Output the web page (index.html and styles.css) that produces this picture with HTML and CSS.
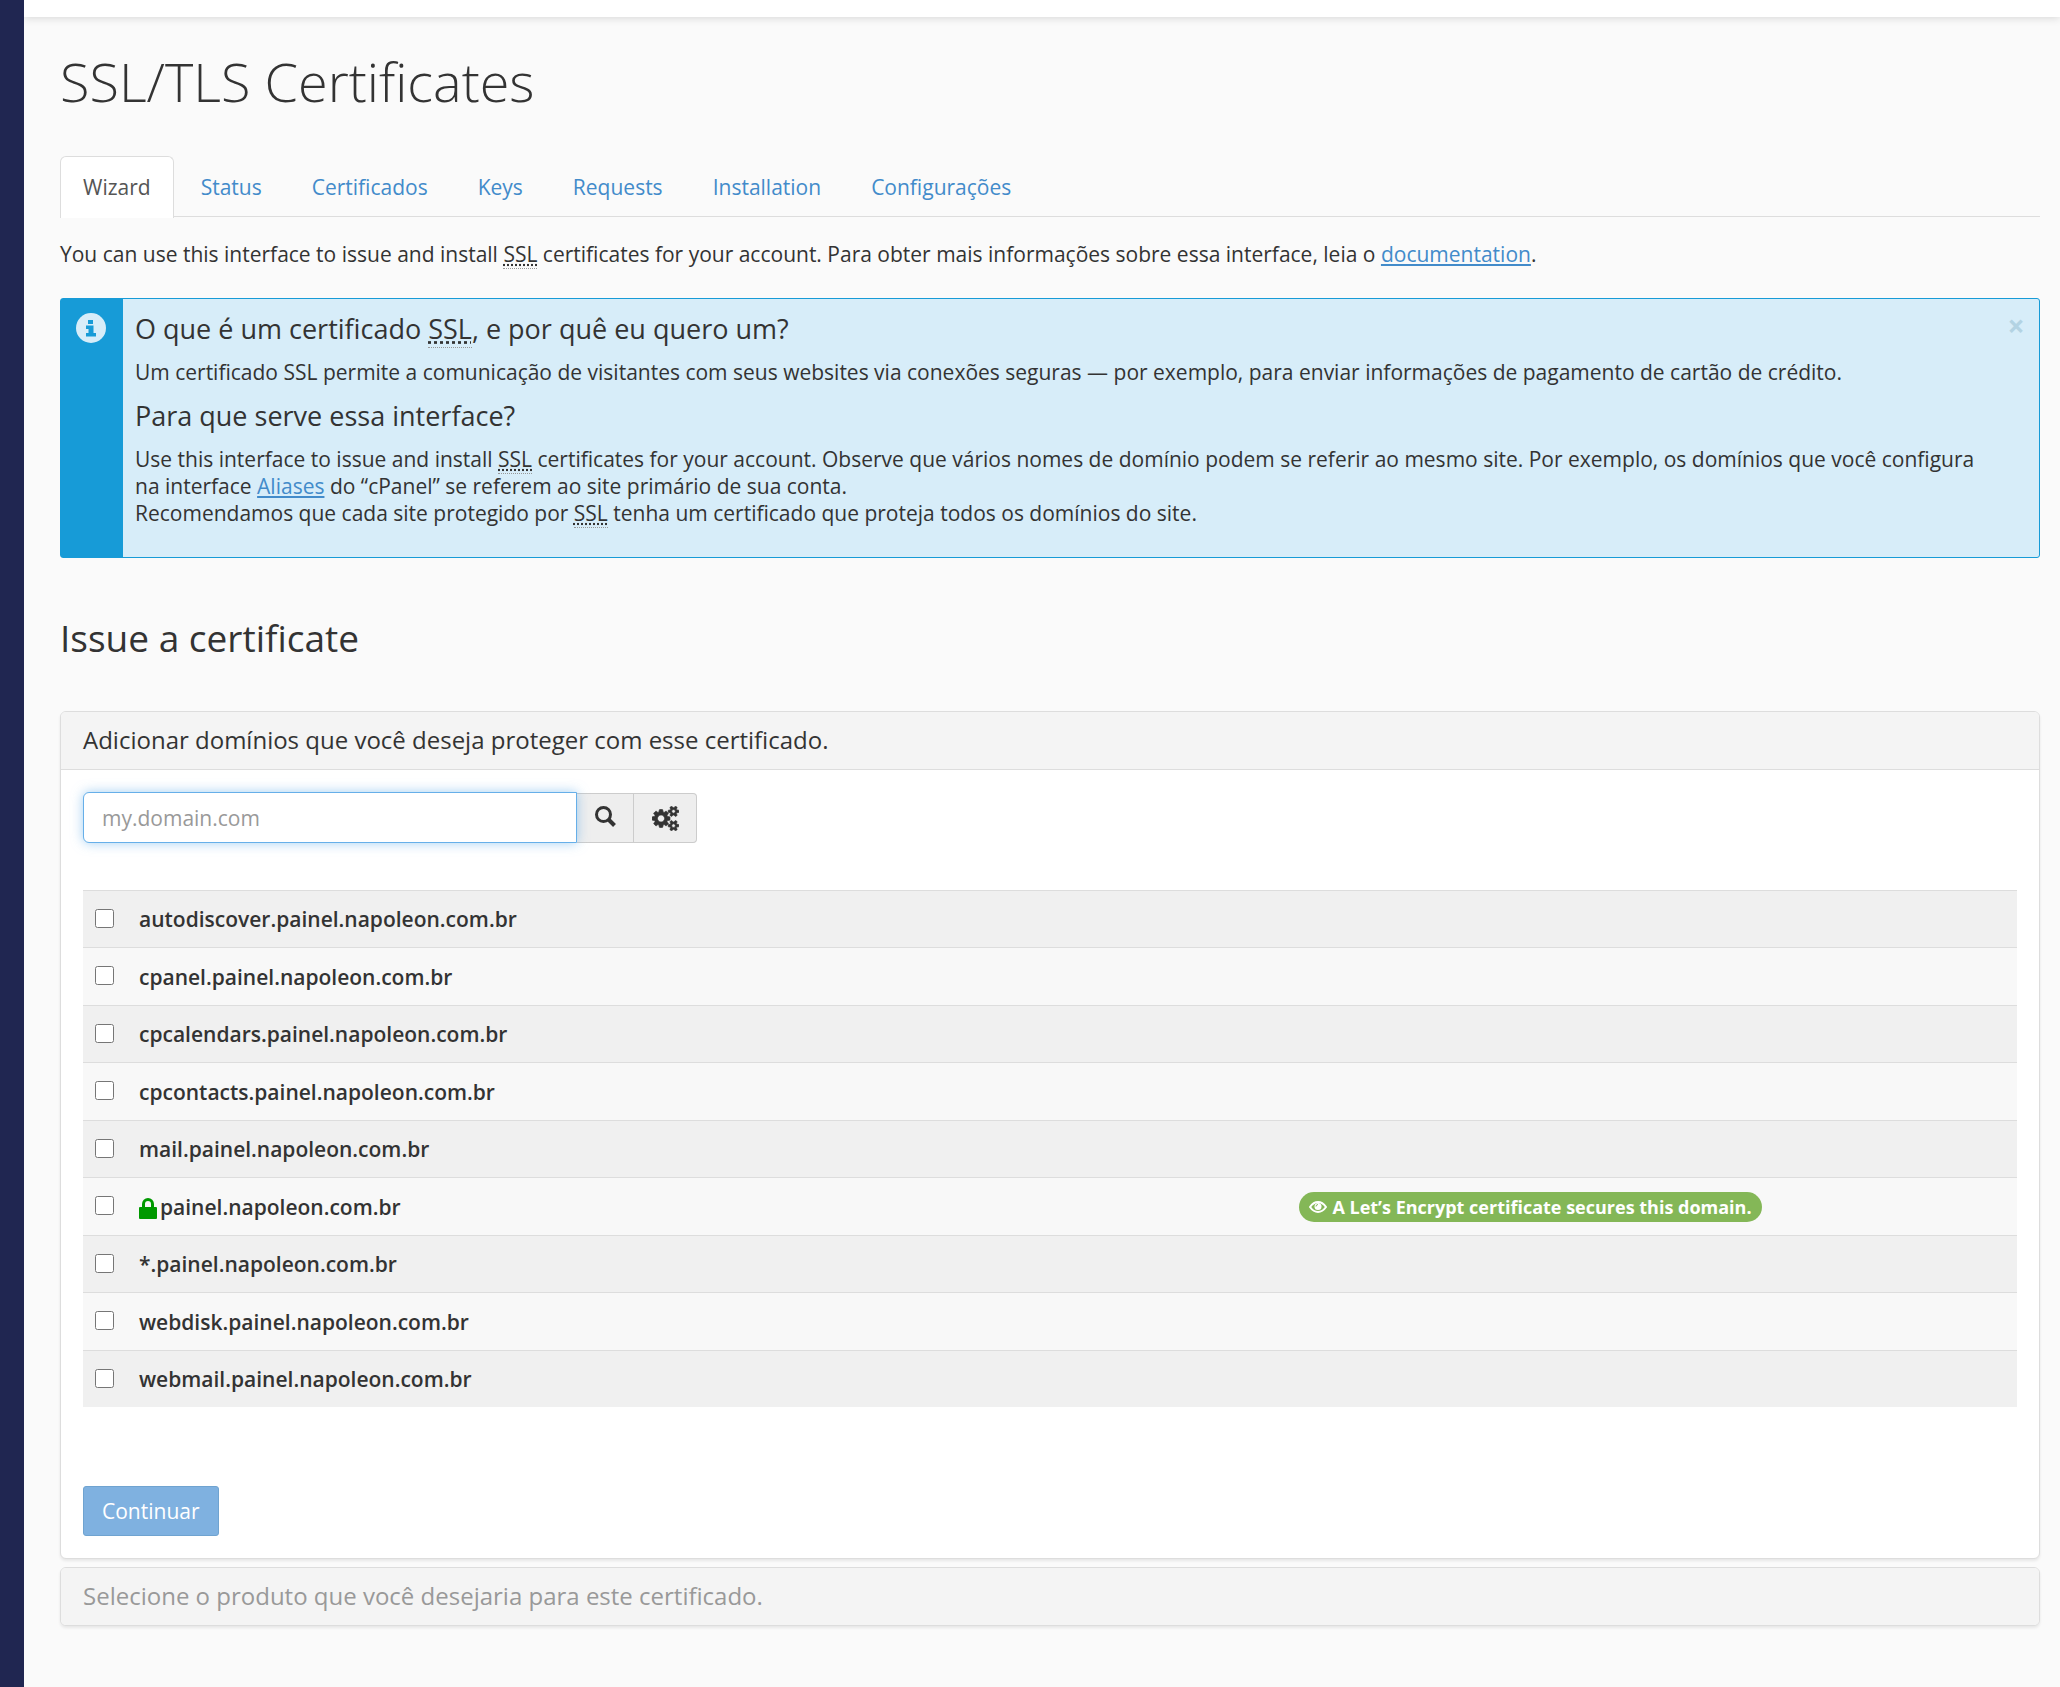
FILE: index.html
```
<!DOCTYPE html>
<html lang="pt-BR">
<head>
    <meta charset="UTF-8">
    <meta name="viewport" content="width=device-width, initial-scale=1.0">
    <title>SSL/TLS Certificates</title>
    <link rel="stylesheet" href="styles.css">
</head>
<body>
    <div class="sidebar"></div>
    <div class="page">
        <header class="topbar"></header>
        <main class="content">
            <h1>SSL/TLS Certificates</h1>

            <nav class="tabs">
                <a href="#" class="tab active">Wizard</a>
                <a href="#" class="tab">Status</a>
                <a href="#" class="tab">Certificados</a>
                <a href="#" class="tab">Keys</a>
                <a href="#" class="tab">Requests</a>
                <a href="#" class="tab">Installation</a>
                <a href="#" class="tab">Configurações</a>
            </nav>

            <p class="intro">You can use this interface to issue and install <abbr title="Secure Sockets Layer">SSL</abbr> certificates for your account. Para obter mais informações sobre essa interface, leia o <a href="#">documentation</a>.</p>

            <div class="alert">
                <div class="alert-icon">
                    <svg width="30" height="30" viewBox="0 0 30 30">
                        <circle cx="15" cy="15" r="15" fill="#d7edf9"/>
                        <path d="M12 7h5v4h-5zM10 12.500h7.500v7.500h2.500v3.500h-10v-3.500h2.500v-4h-2.500z" fill="#179bd7"/>
                    </svg>
                </div>
                <div class="alert-body">
                    <h3>O que é um certificado <abbr title="Secure Sockets Layer">SSL</abbr>, e por quê eu quero um?</h3>
                    <p>Um certificado SSL permite a comunicação de visitantes com seus websites via conexões seguras — por exemplo, para enviar informações de pagamento de cartão de crédito.</p>
                    <h3>Para que serve essa interface?</h3>
                    <p>Use this interface to issue and install <abbr title="Secure Sockets Layer">SSL</abbr> certificates for your account. Observe que vários nomes de domínio podem se referir ao mesmo site. Por exemplo, os domínios que você configura na interface <a href="#">Aliases</a> do “cPanel” se referem ao site primário de sua conta.<br>
                    Recomendamos que cada site protegido por <abbr title="Secure Sockets Layer">SSL</abbr> tenha um certificado que proteja todos os domínios do site.</p>
                </div>
                <button type="button" class="close" aria-label="Fechar">×</button>
            </div>

            <h2>Issue a certificate</h2>

            <section class="panel">
                <h4 class="panel-heading">Adicionar domínios que você deseja proteger com esse certificado.</h4>
                <form class="panel-body">
                    <div class="search">
                        <input type="text" class="search-input" placeholder="my.domain.com" aria-label="Domínio">
                        <button type="button" class="search-btn" aria-label="Pesquisar">
                            <svg width="21" height="21" viewBox="0 0 21 21" fill="none" stroke="#333">
                                <circle cx="8.500" cy="8.500" r="7" stroke-width="3"/>
                                <path d="M13.500 13.500l6 6" stroke-width="4"/>
                            </svg>
                        </button>
                        <button type="button" class="search-btn search-btn-last" aria-label="Configurações">
                            <svg width="27" height="25" viewBox="0 0 1920 1792" fill="#333" stroke="#333" stroke-width="50"><path d="M896 896q0-106-75-181t-181-75-181 75-75 181 75 181 181 75 181-75 75-181zm768 512q0-52-38-90t-90-38-90 38-38 90q0 53 37.500 90.500t90.500 37.500 90.500-37.500 37.500-90.500zm0-1024q0-52-38-90t-90-38-90 38-38 90q0 53 37.500 90.500t90.500 37.500 90.500-37.500 37.500-90.500zm-384 421v185q0 10-7 19.500t-16 10.500l-155 24q-11 35-32 76 34 48 90 115 7 11 7 20 0 12-7 19-23 30-82.500 89.500t-78.500 59.500q-11 0-21-7l-115-90q-37 19-77 31-11 108-23 155-7 24-30 24h-186q-11 0-20-7.500t-10-17.500l-23-153q-34-10-75-31l-118 89q-7 7-20 7-11 0-21-8-144-133-144-160 0-9 7-19 10-14 41-53t47-61q-23-44-35-82l-152-24q-10-1-17-9.500t-7-19.500v-185q0-10 7-19.500t16-10.500l155-24q11-35 32-76-34-48-90-115-7-11-7-20 0-12 7-20 22-30 82-89t79-59q11 0 21 7l115 90q34-18 77-32 11-108 23-154 7-24 30-24h186q11 0 20 7.500t10 17.500l23 153q34 10 75 31l118-89q8-7 20-7 11 0 21 8 144 133 144 160 0 8-7 19-12 16-42 54t-45 60q23 48 34 82l152 23q10 2 17 10.500t7 19.500zm640 533v140q0 16-149 31-12 27-30 52 51 113 51 138 0 4-4 7-122 71-124 71-8 0-46-47t-52-68q-20 2-30 2t-30-2q-14 21-52 68t-46 47q-2 0-124-71-4-3-4-7 0-25 51-138-18-25-30-52-149-15-149-31v-140q0-16 149-31 13-29 30-52-51-113-51-138 0-4 4-7 4-2 35-20t59-34 30-16q8 0 46 46.500t52 67.500q20-2 30-2t30 2q51-71 92-112l6-2q4 0 124 70 4 3 4 7 0 25-51 138 17 23 30 52 149 15 149 31zm0-1024v140q0 16-149 31-12 27-30 52 51 113 51 138 0 4-4 7-122 71-124 71-8 0-46-47t-52-68q-20 2-30 2t-30-2q-14 21-52 68t-46 47q-2 0-124-71-4-3-4-7 0-25 51-138-18-25-30-52-149-15-149-31v-140q0-16 149-31 13-29 30-52-51-113-51-138 0-4 4-7 4-2 35-20t59-34 30-16q8 0 46 46.500t52 67.500q20-2 30-2t30 2q51-71 92-112l6-2q4 0 124 70 4 3 4 7 0 25-51 138 17 23 30 52 149 15 149 31z"/></svg>
                        </button>
                    </div>

                    <table class="domains">
                        <tr>
                            <td class="check"><input type="checkbox" id="domain1"></td>
                            <td class="name"><label for="domain1">autodiscover.painel.napoleon.com.br</label></td>
                            <td></td>
                        </tr>
                        <tr>
                            <td class="check"><input type="checkbox" id="domain2"></td>
                            <td class="name"><label for="domain2">cpanel.painel.napoleon.com.br</label></td>
                            <td></td>
                        </tr>
                        <tr>
                            <td class="check"><input type="checkbox" id="domain3"></td>
                            <td class="name"><label for="domain3">cpcalendars.painel.napoleon.com.br</label></td>
                            <td></td>
                        </tr>
                        <tr>
                            <td class="check"><input type="checkbox" id="domain4"></td>
                            <td class="name"><label for="domain4">cpcontacts.painel.napoleon.com.br</label></td>
                            <td></td>
                        </tr>
                        <tr>
                            <td class="check"><input type="checkbox" id="domain5"></td>
                            <td class="name"><label for="domain5">mail.painel.napoleon.com.br</label></td>
                            <td></td>
                        </tr>
                        <tr>
                            <td class="check"><input type="checkbox" id="domain6"></td>
                            <td class="name">
                                <label for="domain6">
                                    <svg class="lock" width="18" height="21" viewBox="0 0 18 21">
                                        <path d="M4.500 10V6a4.500 4.500 0 0 1 9 0v4" fill="none" stroke="#090" stroke-width="3"/>
                                        <rect y="9" width="18" height="12" rx="1" fill="#090"/>
                                    </svg>painel.napoleon.com.br
                                </label>
                            </td>
                            <td>
                                <span class="badge">
                                    <svg width="18" height="12" viewBox="0 0 18 12" fill="none" stroke="#fff">
                                        <path d="M1 6q3.500-5 8-5t8 5q-3.500 5-8 5t-8-5z" stroke-width="2"/>
                                        <circle cx="9" cy="5.500" r="3.500" fill="#fff" stroke="none"/>
                                        <path d="M7 5.500a2 2 0 0 1 2-2" stroke="#84b757" stroke-width="1"/>
                                    </svg>
                                    A Let’s Encrypt certificate secures this domain.
                                </span>
                            </td>
                        </tr>
                        <tr>
                            <td class="check"><input type="checkbox" id="domain7"></td>
                            <td class="name"><label for="domain7">*.painel.napoleon.com.br</label></td>
                            <td></td>
                        </tr>
                        <tr>
                            <td class="check"><input type="checkbox" id="domain8"></td>
                            <td class="name"><label for="domain8">webdisk.painel.napoleon.com.br</label></td>
                            <td></td>
                        </tr>
                        <tr>
                            <td class="check"><input type="checkbox" id="domain9"></td>
                            <td class="name"><label for="domain9">webmail.painel.napoleon.com.br</label></td>
                            <td></td>
                        </tr>
                    </table>

                    <button type="submit" class="btn" disabled>Continuar</button>
                </form>
            </section>

            <section class="panel panel-closed">
                <h4 class="panel-heading">Selecione o produto que você desejaria para este certificado.</h4>
            </section>
        </main>
    </div>
</body>
</html>
```
FILE: styles.css
```
* {
    box-sizing: border-box;
}

body {
    margin: 0;
    display: flex;
    min-height: 100vh;
    background: #fafafa;
    color: #333;
    font-family: "Open Sans", "Noto Sans", sans-serif;
    font-size: 21px;
    line-height: 27px;
}

h1, h2, h3, h4, p {
    margin: 0;
}

a {
    color: #428bca;
}

abbr[title] {
    border-bottom: 1px dotted #999;
    text-decoration: underline dotted;
}

.sidebar {
    width: 24px;
    flex-shrink: 0;
    background: #202651;
    z-index: 1;
}

.page {
    flex: 1;
    min-width: 0;
}

.topbar {
    height: 17px;
    background: #fff;
    box-shadow: 0 1px 8px rgba(0, 0, 0, 0.15);
}

.content {
    padding: 36px 20px 60px 36px;
}

h1 {
    font-size: 54px;
    font-weight: 300;
    line-height: 57px;
    margin-bottom: 46px;
}

h2 {
    font-size: 37px;
    font-weight: 500;
    line-height: 40px;
    margin: 60px 0 53px;
}

/* Tabs */
.tabs {
    display: flex;
    gap: 4px;
    height: 61px;
    border-bottom: 1px solid #ddd;
    margin-bottom: 24px;
}

.tab {
    height: 62px;
    padding: 17px 22px;
    border: 1px solid transparent;
    border-bottom: 0;
    border-radius: 6px 6px 0 0;
    text-decoration: none;
}

.tab.active {
    background: #fff;
    border-color: #ddd;
    color: #555;
}

.intro {
    margin-bottom: 30px;
}

/* Info box */
.alert {
    display: flex;
    border: 1px solid #179bd7;
    border-radius: 3px;
    background: #d7edf9;
}

.alert-icon {
    width: 62px;
    flex-shrink: 0;
    padding: 14px 0 0 15px;
    background: #179bd7;
}

.alert-body {
    flex: 1;
    padding: 16px 12px 30px;
}

.alert-body h3 {
    font-size: 27px;
    font-weight: 500;
    line-height: 28px;
    margin-bottom: 16px;
}

.alert-body p + h3 {
    margin-top: 16px;
}

.close {
    align-self: flex-start;
    width: 30px;
    margin: 12px 8px 0 0;
    padding: 0;
    border: 0;
    background: none;
    color: #b3d3e3;
    font-family: inherit;
    font-size: 30px;
    font-weight: 700;
    line-height: 30px;
    cursor: pointer;
}

/* Panels */
.panel {
    border: 1px solid #ddd;
    border-radius: 6px;
    background: #fff;
    box-shadow: 0 2px 3px rgba(0, 0, 0, 0.08);
    margin-bottom: 8px;
}

.panel-heading {
    padding: 15px 22px 16px;
    border-bottom: 1px solid #ddd;
    border-radius: 5px 5px 0 0;
    background: #f4f4f4;
    font-size: 24px;
    font-weight: 500;
    line-height: 26px;
}

.panel-closed .panel-heading {
    border-bottom: 0;
    border-radius: 5px;
    color: #999;
}

.panel-body {
    padding: 22px;
}

.search {
    display: flex;
    align-items: flex-end;
    margin-bottom: 47px;
}

.search-input {
    width: 494px;
    height: 51px;
    padding: 0 18px;
    border: 1px solid #66afe9;
    border-radius: 6px 0 0 6px;
    background: #fff;
    color: #333;
    font-family: inherit;
    font-size: 21px;
    outline: none;
    box-shadow: 0 0 12px rgba(102, 175, 233, 0.6);
    z-index: 1;
}

.search-input::placeholder {
    color: #999;
}

.search-btn {
    display: flex;
    align-items: center;
    justify-content: center;
    width: 57px;
    height: 50px;
    padding: 0 0 3px;
    border: 1px solid #ccc;
    border-left: 0;
    background: #eee;
}

.search-btn-last {
    width: 63px;
    padding: 0;
    border-radius: 0 4px 4px 0;
}

/* Domain list */
.domains {
    width: 100%;
    table-layout: fixed;
    border-collapse: separate;
    border-spacing: 0;
    margin-bottom: 79px;
}

.domains td {
    height: 57px;
    padding: 1px 11px 0;
    border-top: 1px solid #ddd;
    background: #f0f0f0;
    vertical-align: middle;
}

.domains tr:nth-child(even) td {
    height: 58px;
    background: #f8f8f8;
}

.domains .check {
    width: 45px;
    padding: 0 0 2px 12px;
}

.domains .name {
    width: 60%;
    font-weight: 600;
}

.domains input {
    display: block;
    width: 19px;
    height: 19px;
    margin: 0;
}

.lock {
    margin-right: 3px;
    vertical-align: -4px;
}

.badge {
    display: inline-flex;
    align-items: center;
    gap: 5px;
    height: 30px;
    padding: 0 10px;
    border-radius: 15px;
    background: #84b757;
    color: #fff;
    font-size: 18px;
    font-weight: 700;
    white-space: nowrap;
}

.btn {
    display: block;
    height: 50px;
    padding: 0 18px;
    border: 1px solid #6fa3d0;
    border-radius: 3px;
    background: #7fb1e0;
    color: #fff;
    font-family: inherit;
    font-size: 21px;
}
```
